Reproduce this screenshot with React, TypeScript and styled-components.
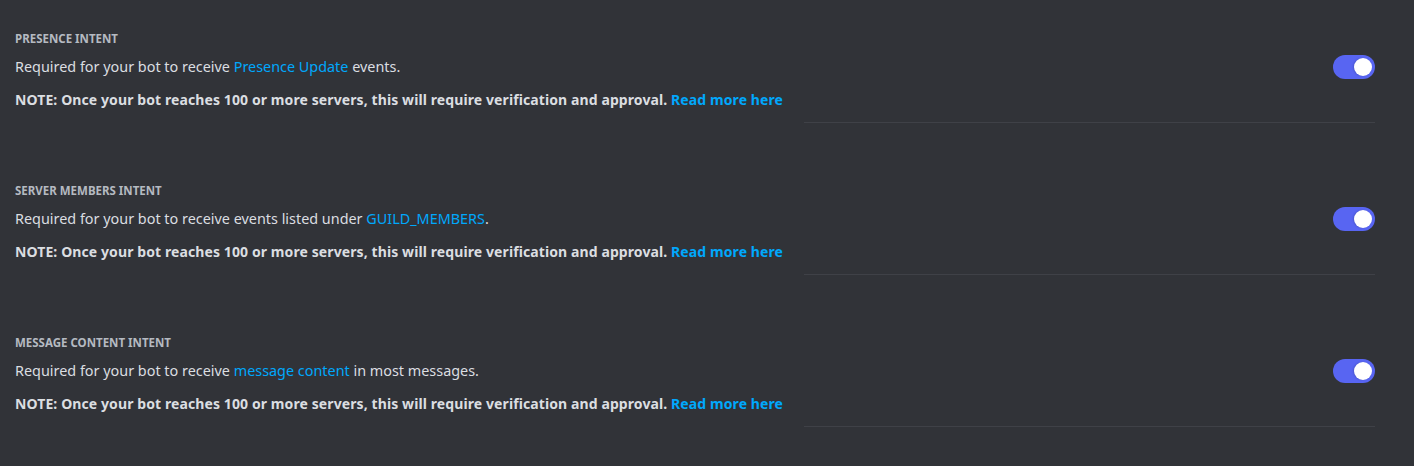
import styled, { createGlobalStyle } from "styled-components"

const GlobalStyle = createGlobalStyle`
  html, body {
    margin: 0;
    padding: 0;
    background: #313338;
  }
  body {
    font-family: "Noto Sans", "Open Sans", sans-serif;
    -webkit-font-smoothing: antialiased;
  }
`

const Page = styled.div`
  width: 1414px;
  height: 466px;
  box-sizing: border-box;
  background: #313338;
  padding: 31px 39px 0 15px;
`

const Section = styled.section`
  display: grid;
  grid-template-columns: 1fr auto;
  margin-bottom: 60px;
`

const Title = styled.h3`
  grid-column: 1 / -1;
  margin: 0 0 8px;
  font-size: 11.5px;
  line-height: 16px;
  font-weight: 700;
  text-transform: uppercase;
  color: #b5bac1;
`

const Description = styled.div`
  align-self: center;
  font-size: 14.4px;
  line-height: 20px;
  color: #dbdee1;
`

const Note = styled.div`
  grid-column: 1;
  margin-top: 11px;
  font-size: 14px;
  line-height: 20px;
  font-weight: 700;
  letter-spacing: 0.1px;
  color: #dbdee1;
`

const Link = styled.a<{ $bold?: boolean }>`
  color: #00a8fc;
  text-decoration: none;
  cursor: pointer;
  font-weight: ${p => (p.$bold ? 700 : 400)};
`

const Divider = styled.div`
  grid-column: 1 / -1;
  justify-self: end;
  width: 571px;
  height: 1px;
  margin-top: 12px;
  background: #3f4147;
`

const Switch = styled.div<{ $on: boolean }>`
  grid-column: 2;
  grid-row: 2;
  align-self: center;
  position: relative;
  width: 42px;
  height: 24px;
  border-radius: 12px;
  background: ${p => (p.$on ? "#5865f2" : "#80848e")};
  cursor: pointer;
`

const Knob = styled.span<{ $on: boolean }>`
  position: absolute;
  top: 3px;
  left: ${p => (p.$on ? "21px" : "3px")};
  width: 18px;
  height: 18px;
  border-radius: 50%;
  background: #fff;
  box-shadow: -1px 0 2px rgba(0, 0, 0, 0.15);
`

interface IntentProps {
  title: string
  before: string
  link: string
  after: string
}

const Intent = (props: IntentProps) => {
  const { title, before, link, after } = props
  return (<Section>
    <Title>{title}</Title>
    <Description>
      {before}<Link>{link}</Link>{after}
    </Description>
    <Switch $on={true}><Knob $on={true} /></Switch>
    <Note>
      NOTE: Once your bot reaches 100 or more servers, this will require verification and approval. <Link $bold>Read more here</Link>
    </Note>
    <Divider />
  </Section>)
}

export default function App() {
  return (<>
    <GlobalStyle />
    <Page>
      <Intent title="Presence Intent" before="Required for your bot to receive " link="Presence Update" after=" events." />
      <Intent title="Server Members Intent" before="Required for your bot to receive events listed under " link="GUILD_MEMBERS" after="." />
      <Intent title="Message Content Intent" before="Required for your bot to receive " link="message content" after=" in most messages." />
    </Page>
  </>)
}
